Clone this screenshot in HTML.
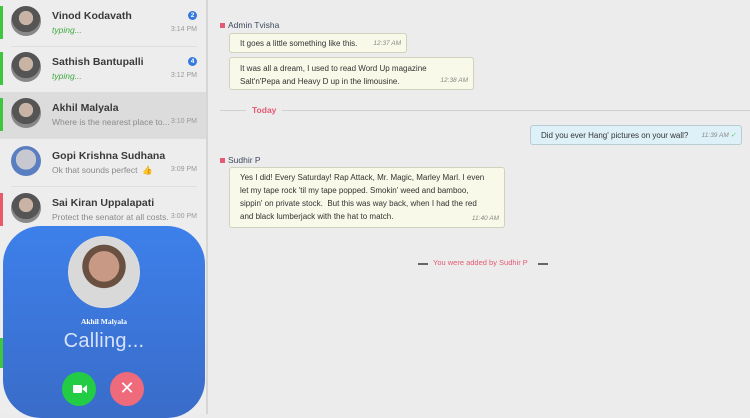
<!DOCTYPE html>
<html><head><meta charset="utf-8"><style>
*{box-sizing:border-box;margin:0;padding:0}
body{width:750px;height:414px;overflow:hidden;font-family:"Liberation Sans",sans-serif;background:#ececec;position:relative}
#side{position:absolute;left:0;top:0;width:208px;height:414px;background:#ededed;border-right:2px solid #d6d6d6}
.row{position:absolute;left:0;width:206px;height:47px}
.row .bar{position:absolute;left:0;top:6px;width:3px;height:33px}
.av{position:absolute;left:11px;top:6px;width:30px;height:30px;border-radius:50%;background:radial-gradient(circle at 50% 40%,#c9b3a5 0 30%,#555 31% 60%,#888 61%)}
.nm{position:absolute;left:52px;top:10px;font-size:10.5px;font-weight:bold;color:#3a3a3a;white-space:nowrap}
.sb{position:absolute;left:52px;top:25px;font-size:8.5px;color:#8a8a8a;white-space:nowrap}
.ty{color:#3fa83f;font-style:italic}
.tm{position:absolute;right:9px;top:26px;font-size:7px;color:#999}
.bd{position:absolute;right:9px;top:11px;width:9px;height:9px;border-radius:50%;background:#3479e0;color:#fff;font-size:6.5px;text-align:center;line-height:9px;font-weight:bold}
.sep{position:absolute;left:11px;right:9px;bottom:0;border-bottom:1px solid #dedede}
#call{position:absolute;left:3px;top:226px;width:202px;height:192px;border-radius:38px;background:linear-gradient(#3d80ea,#3a6cc9)}
.pic{position:absolute;left:65px;top:10px;width:72px;height:72px;border-radius:50%;background:radial-gradient(circle at 50% 42%,#c89a86 0 28%,#6a5040 29% 40%,#d9d9d9 41%);border:1px solid #ddd}
.cn{position:absolute;width:100%;top:91px;text-align:center;color:#fff;font-size:7.5px;font-weight:bold;font-family:"Liberation Serif",serif}
.cl{position:absolute;width:100%;top:104px;text-align:center;color:#e8eeff;font-size:20px;letter-spacing:.3px;opacity:.9}
.btn{position:absolute;top:146px;width:34px;height:34px;border-radius:50%}
#main{position:absolute;left:210px;top:0;right:0;height:414px}
.who{position:absolute;font-size:8.5px;color:#3d4a5c}
.who:before{content:"";display:inline-block;width:5px;height:5px;background:#e35a74;margin-right:3px}
.bub{position:absolute;background:#f8f9e8;border:1px solid #cfd2bc;border-radius:3px;font-size:8px;color:#333;line-height:13px;padding:4px 10px;white-space:nowrap}
.bub i{position:absolute;right:5px;bottom:2px;font-size:6.5px;color:#888}
</style></head><body>
<div id="side">
<div class="row" style="top:0"><div class="bar" style="background:#3fc63f"></div><div class="av"></div><div class="nm">Vinod Kodavath</div><div class="sb ty">typing...</div><div class="bd">2</div><div class="tm">3:14 PM</div><div class="sep"></div></div>
<div class="row" style="top:46px"><div class="bar" style="background:#3fc63f"></div><div class="av"></div><div class="nm">Sathish Bantupalli</div><div class="sb ty">typing...</div><div class="bd">4</div><div class="tm">3:12 PM</div></div>
<div class="row" style="top:92px;background:#dcdcdc"><div class="bar" style="background:#3fc63f"></div><div class="av"></div><div class="nm">Akhil Malyala</div><div class="sb">Where is the nearest place to...</div><div class="tm">3:10 PM</div></div>
<div class="row" style="top:140px"><div class="av" style="background:radial-gradient(circle at 50% 45%,#c8c8d0 0 45%,#5a7fc0 46%)"></div><div class="nm">Gopi Krishna Sudhana</div><div class="sb">Ok that sounds perfect &nbsp;👍</div><div class="tm">3:09 PM</div><div class="sep"></div></div>
<div class="row" style="top:187px"><div class="bar" style="background:#e85a6a"></div><div class="av"></div><div class="nm">Sai Kiran Uppalapati</div><div class="sb">Protect the senator at all costs.</div><div class="tm">3:00 PM</div></div>
<div style="position:absolute;left:0;top:338px;width:3px;height:30px;background:#3fc63f"></div>
</div>
<div id="call">
<div class="pic"></div>
<div class="cn">Akhil Malyala</div>
<div class="cl">Calling...</div>
<div class="btn" style="left:59px;background:#22cc44"><div style="position:absolute;left:11px;top:13px;width:9px;height:8px;background:#fff;border-radius:1px"></div><div style="position:absolute;left:20px;top:13px;width:0;height:0;border-top:4px solid transparent;border-bottom:4px solid transparent;border-right:5px solid #fff"></div></div>
<div class="btn" style="left:107px;background:#ef6a7a;color:#fff;font-size:18px;text-align:center;line-height:33px">✕</div>
</div>
<div id="main">
<div class="who" style="left:10px;top:20px">Admin Tvisha</div>
<div class="bub" style="left:19px;top:33px;width:178px;height:20px;padding-top:3px">It goes a little something like this.<i>12:37 AM</i></div>
<div class="bub" style="left:19px;top:57px;width:245px;height:33px">It was all a dream, I used to read Word Up magazine<br>Salt'n'Pepa and Heavy D up in the limousine.<i>12:38 AM</i></div>
<div style="position:absolute;left:10px;right:0;top:110px;border-top:1px solid #d0d0d0"></div>
<div style="position:absolute;left:36px;top:105px;padding:0 6px;background:#ececec;color:#e35a74;font-size:8.5px;font-weight:bold">Today</div>
<div class="bub" style="left:320px;top:125px;width:212px;height:20px;background:#def1f8;border-color:#b8ccd4;padding-top:3px">Did you ever Hang' pictures on your wall?<i>11:39 AM <span style="color:#5cb85c">✓</span></i></div>
<div class="who" style="left:10px;top:155px">Sudhir P</div>
<div class="bub" style="left:19px;top:167px;width:276px;height:61px;padding-top:3px">Yes I did! Every Saturday! Rap Attack, Mr. Magic, Marley Marl. I even<br>let my tape rock 'til my tape popped. Smokin' weed and bamboo,<br>sippin' on private stock.&nbsp; But this was way back, when I had the red<br>and black lumberjack with the hat to match.<i>11:40 AM</i></div>
<div style="position:absolute;left:208px;top:263px;width:10px;height:2px;background:#666"></div>
<div style="position:absolute;left:223px;top:258px;font-size:7.5px;color:#e35a74">You were added by Sudhir P</div>
<div style="position:absolute;left:328px;top:263px;width:10px;height:2px;background:#666"></div>
</div>
</body></html>
